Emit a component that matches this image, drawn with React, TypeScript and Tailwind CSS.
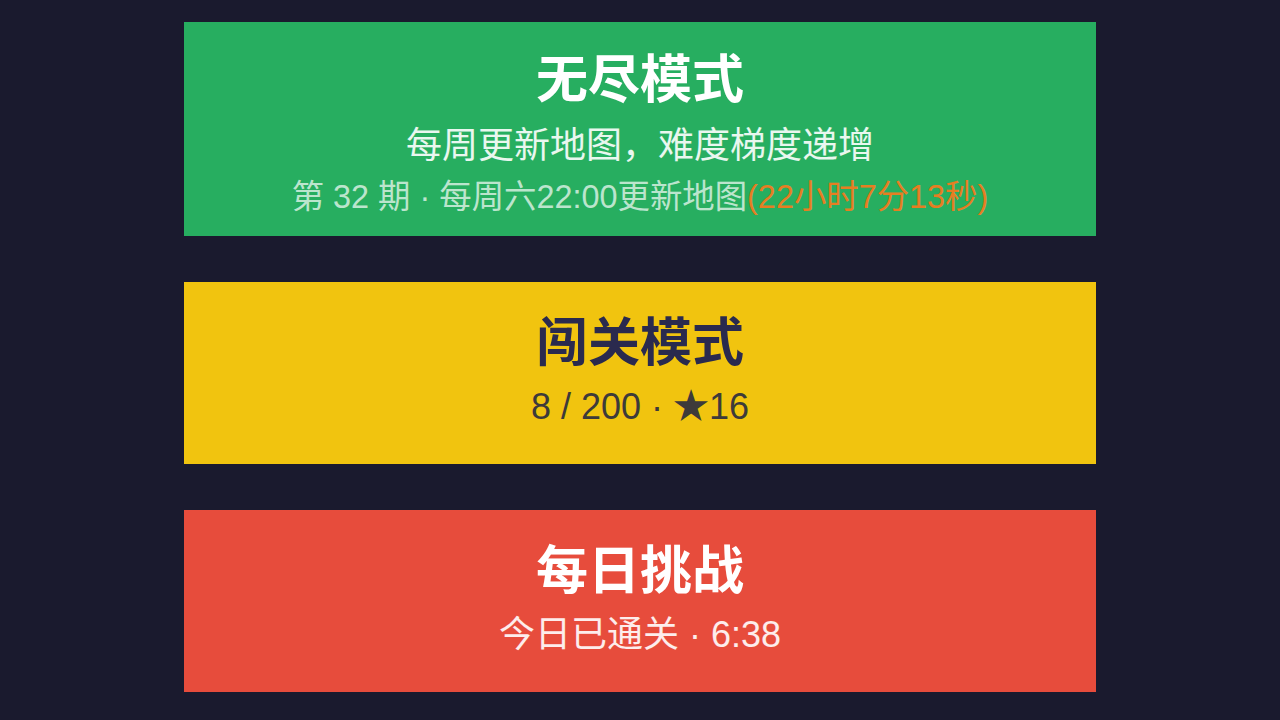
const font = { fontFamily: '"Liberation Sans", "Noto Sans CJK SC", sans-serif' }

function ModeCard({
  bg,
  title,
  titleColor,
  children,
}: {
  bg: string
  title: string
  titleColor: string
  children: React.ReactNode
}) {
  return (
    <div className={`w-[912px] flex flex-col items-center ${bg}`}>
      <h2 className={`text-[52px] leading-[64px] font-bold ${titleColor}`}>{title}</h2>
      {children}
    </div>
  )
}

export default function App() {
  return (
    <div className="min-h-screen w-full bg-[#1a1a2e] flex flex-col items-center gap-[46px] pt-[22px] pb-[28px]" style={font}>
      <ModeCard bg="bg-[#27ae60] pt-[26px] pb-[19px]" title="无尽模式" titleColor="text-white">
        <p className="pt-[3px] text-[36px] leading-[62px] text-white/90">每周更新地图，难度梯度递增</p>
        <p className="text-[32.4px] leading-[40px] text-white/70">
          第 32 期 · 每周六22:00更新地图<span className="text-[#e67e22]">(22小时7分13秒)</span>
        </p>
      </ModeCard>
      <ModeCard bg="bg-[#f1c40f] pt-[29px] pb-[25px]" title="闯关模式" titleColor="text-[#2a2a4e]">
        <p className="text-[36px] leading-[64px] text-[#3d3a3a]">8 / 200 · ★16</p>
      </ModeCard>
      <ModeCard bg="bg-[#e74c3c] pt-[29px] pb-[25px]" title="每日挑战" titleColor="text-white">
        <p className="text-[36px] leading-[64px] text-white/90">今日已通关 · 6:38</p>
      </ModeCard>
    </div>
  )
}
